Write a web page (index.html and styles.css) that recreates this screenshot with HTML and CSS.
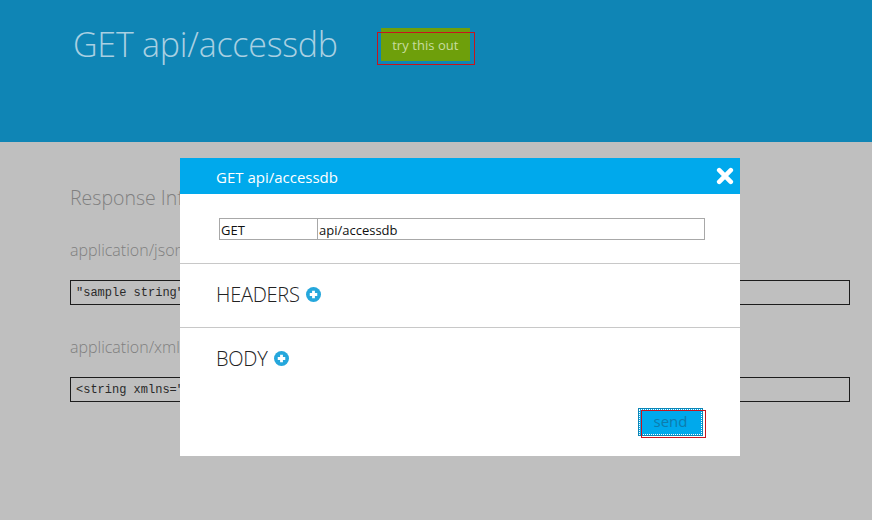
FILE: index.html
```html
<!DOCTYPE html>
<html lang="en">
<head>
<meta charset="utf-8">
<title>GET api/accessdb</title>
<link rel="stylesheet" href="styles.css">
</head>
<body>
<header class="hero">
  <h1 class="hero-title">GET api/accessdb</h1>
  <div class="try-wrap">
    <button class="try-btn">try this out</button>
    <span class="mark mark-try"></span>
  </div>
</header>
<main class="content">
  <h2 class="section-title">Response Information</h2>
  <h3 class="format-title first">application/json</h3>
  <pre class="sample">"sample string"</pre>
  <h3 class="format-title">application/xml</h3>
  <pre class="sample">&lt;string xmlns="http://schemas.microsoft.com/2003/10/Serialization/"&gt;sample string&lt;/string&gt;</pre>
</main>
<section class="dialog">
  <div class="dialog-bar">
    <span class="dialog-title">GET api/accessdb</span>
    <svg class="close-icon" viewBox="0 0 18 18" width="18" height="18" aria-hidden="true"><path d="M3.2 3.2 14.8 14.8M14.8 3.2 3.2 14.8" stroke="#fff" stroke-width="4.6" stroke-linecap="round"/></svg>
  </div>
  <div class="request-row">
    <div class="request-line">
      <span class="field field-method">GET</span>
      <span class="field field-uri">api/accessdb</span>
    </div>
  </div>
  <div class="group">
    <span class="group-title">HEADERS</span>
    <svg class="plus-icon" viewBox="0 0 16 16" width="15" height="15" aria-hidden="true"><circle cx="8" cy="8" r="8" fill="#25a7dc"/><path d="M8 4v8M4 8h8" stroke="#fff" stroke-width="3"/></svg>
  </div>
  <div class="group group-body">
    <span class="group-title">BODY</span>
    <svg class="plus-icon" viewBox="0 0 16 16" width="15" height="15" aria-hidden="true"><circle cx="8" cy="8" r="8" fill="#25a7dc"/><path d="M8 4v8M4 8h8" stroke="#fff" stroke-width="3"/></svg>
  </div>
  <div class="dialog-foot">
    <div class="send-wrap">
      <button class="send-btn"><span class="send-label">send</span></button>
      <span class="mark mark-send"></span>
    </div>
  </div>
</section>
</body>
</html>
```
FILE: styles.css
```css
html, body {
  margin: 0;
  height: 100%;
}
body {
  position: relative;
  width: 872px;
  height: 520px;
  overflow: hidden;
  background: #bfbfbf;
  font-family: "Open Sans", "Liberation Sans", sans-serif;
}
.hero {
  display: flex;
  align-items: flex-start;
  height: 142px;
  padding-left: 73px;
  box-sizing: border-box;
  background: #0f85b5;
}
.hero-title {
  margin: 19px 0 0;
  font-size: 34px;
  line-height: 50px;
  font-weight: 300;
  letter-spacing: -0.24px;
  color: #a9d0e2;
}
.try-wrap {
  position: relative;
  margin: 28px 0 0 43px;
}
.try-btn {
  display: block;
  width: 89px;
  height: 33px;
  padding: 0;
  border: 0;
  background: #6e9f0b;
  color: #c8dca0;
  font: 400 13px/35px "Open Sans", sans-serif;
  letter-spacing: 0.05px;
}
.mark {
  position: absolute;
  box-sizing: border-box;
  border: 1px solid #c8141e;
  pointer-events: none;
}
.mark-try {
  left: -4px;
  top: 4px;
  width: 98px;
  height: 33px;
}
.content {
  padding: 43px 22px 0 70px;
}
.section-title {
  margin: 0;
  font-size: 19.5px;
  line-height: 25px;
  font-weight: 300;
  color: #808080;
}
.format-title {
  margin: 21px 0 0;
  font-size: 16px;
  line-height: 22px;
  font-weight: 300;
  color: #808080;
}
.format-title.first {
  margin-top: 29px;
}
.sample {
  margin: 19px 0 0;
  height: 23px;
  box-sizing: content-box;
  padding: 0 5px;
  border: 1px solid #1c1c1c;
  font: 12px/25px "Liberation Mono", monospace;
  color: #2a2a2a;
  overflow: hidden;
  white-space: pre;
}
.format-title + .sample + .format-title {
  margin-top: 31px;
}
.dialog {
  position: absolute;
  left: 180px;
  top: 158px;
  width: 560px;
  height: 298px;
  background: #fff;
}
.dialog-bar {
  display: flex;
  align-items: center;
  justify-content: space-between;
  height: 36px;
  padding: 0 6px 0 36px;
  background: #00a9ec;
}
.dialog-title {
  padding-top: 2px;
  font-size: 15px;
  color: #fff;
}
.close-icon {
  display: block;
}
.request-row {
  height: 70px;
  padding: 24px 35px 0 39px;
  box-sizing: border-box;
  border-bottom: 1px solid #c8c8c8;
}
.request-line {
  display: flex;
  height: 20px;
  border: 1px solid #a8a8a8;
  font-size: 13px;
  line-height: 22px;
  color: #111;
}
.field {
  display: block;
  padding-left: 1px;
}
.field-method {
  width: 96px;
  border-right: 1px solid #a8a8a8;
}
.group {
  display: flex;
  align-items: center;
  gap: 6px;
  height: 64px;
  padding-left: 36px;
  padding-bottom: 2px;
  box-sizing: border-box;
  border-bottom: 1px solid #c8c8c8;
}
.group-body {
  padding-bottom: 4px;
  border-bottom: 0;
}
.group-title {
  font-size: 20px;
  font-weight: 300;
  letter-spacing: -0.25px;
  color: #222;
}
.dialog-foot {
  display: flex;
  justify-content: flex-end;
  padding: 0 37px 0 0;
  margin-top: 16px;
}
.send-wrap {
  position: relative;
}
.send-btn {
  display: block;
  box-sizing: border-box;
  width: 65px;
  height: 28px;
  padding: 0 0 2px;
  border: 1px solid #0f85b5;
  outline: 1px dotted #fff;
  outline-offset: -2px;
  background: #00a9ec;
  color: #0d7cad;
  font: 400 15px/22px "Open Sans", sans-serif;
}
.mark-send {
  left: 3px;
  top: 2px;
  width: 65px;
  height: 28px;
}
```
